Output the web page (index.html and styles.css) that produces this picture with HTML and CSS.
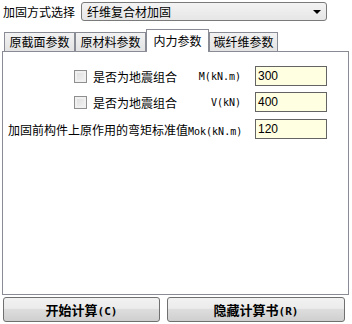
FILE: index.html
```html
<!DOCTYPE html>
<html lang="zh-CN">
<head>
    <meta charset="UTF-8">
    <title>加固计算</title>
    <link rel="stylesheet" href="styles.css">
</head>
<body>
    <div class="top">
        <span class="top-label">加固方式选择</span>
        <div class="select">
            <span>纤维复合材加固</span>
            <span class="arrow"></span>
        </div>
    </div>

    <div class="tabs">
        <div class="tab tab-1">原截面参数</div>
        <div class="tab tab-2">原材料参数</div>
        <div class="tab active">内力参数</div>
        <div class="tab tab-4">碳纤维参数</div>
    </div>

    <div class="panel">
        <div class="row">
            <label class="check"><span class="box"></span>是否为地震组合</label>
            <span class="unit">M(kN.m)</span>
            <div class="input">300</div>
        </div>
        <div class="row">
            <label class="check"><span class="box"></span>是否为地震组合</label>
            <span class="unit">V(kN)</span>
            <div class="input">400</div>
        </div>
        <div class="row row-3">
            <span class="long">加固前构件上原作用的弯矩标准值<span class="mono">Mok(kN.m)</span></span>
            <div class="input">120</div>
        </div>
    </div>

    <div class="buttons">
        <button class="btn btn-start">开始计算<span class="mono">(C)</span></button>
        <button class="btn btn-hide">隐藏计算书<span class="mono">(R)</span></button>
    </div>
</body>
</html>
```

FILE: styles.css
```css
body {
    margin: 0;
    width: 352px;
    height: 324px;
    background-color: #ffffff;
    font-family: "Noto Sans CJK SC", "Liberation Sans", sans-serif;
    font-size: 12px;
    color: #000;
    overflow: hidden;
}
.mono {
    font-family: "DejaVu Sans Mono", monospace;
    font-size: 10px;
}

/* top selector */
.top {
    display: flex;
    align-items: center;
    height: 19px;
    padding: 2px 0 0 3px;
}
.top-label {
    width: 78px;
    line-height: 19px;
}
.select {
    display: flex;
    align-items: center;
    justify-content: space-between;
    box-sizing: border-box;
    width: 246px;
    height: 19px;
    padding: 0 5px 0 5px;
    border: 1px solid #7a7a7a;
    border-radius: 3px;
    background: linear-gradient(#f3f3f3, #e6e6e6);
    line-height: 17px;
}
.arrow {
    width: 0;
    height: 0;
    border-left: 4px solid transparent;
    border-right: 4px solid transparent;
    border-top: 4px solid #000;
    margin-top: 1px;
}

/* tabs */
.tabs {
    display: flex;
    align-items: flex-end;
    height: 22px;
    margin-top: 8px;
    padding-left: 4px;
    position: relative;
    z-index: 1;
}
.tab {
    box-sizing: border-box;
    height: 19px;
    border: 1px solid #898c95;
    border-bottom: none;
    background: linear-gradient(#f2f2f2, #e3e3e3);
    text-align: center;
    line-height: 18px;
}
.tab-1, .tab-2 {
    width: 71px;
}
.tab.active {
    width: 63px;
    height: 23px;
    margin-bottom: -1px;
    background: #fff;
    line-height: 21px;
}
.tab-4 {
    width: 69px;
}

/* panel */
.panel {
    box-sizing: border-box;
    height: 244px;
    margin: 0 3px 0 2px;
    border: 1px solid #898c95;
    background: #fff;
    padding-top: 14px;
    display: flex;
    flex-direction: column;
    gap: 6px;
}
.row {
    display: flex;
    align-items: center;
    height: 20px;
    padding-right: 21px;
    white-space: nowrap;
}
.row-3 {
    margin-top: 1px;
}
.check {
    display: flex;
    align-items: center;
    margin-left: 71px;
}
.box {
    box-sizing: border-box;
    width: 13px;
    height: 13px;
    margin-right: 6px;
    border: 1px solid #8f8f8f;
    background: linear-gradient(135deg, #dcdcdc, #f4f4f4);
    box-shadow: inset 0 0 0 2px #f0f0f0;
}
.unit {
    margin-left: auto;
    margin-right: 14px;
    font-family: "DejaVu Sans Mono", monospace;
    font-size: 10px;
}
.long {
    flex: none;
    margin-left: 5px;
    margin-right: auto;
}
.input {
    flex: none;
    box-sizing: border-box;
    width: 72px;
    height: 20px;
    border: 1px solid #646464;
    background: #ffffe1;
    padding-left: 2px;
    font-family: "Liberation Sans", sans-serif;
    font-size: 12px;
    line-height: 18px;
}

/* bottom buttons */
.buttons {
    display: flex;
    margin-top: 2px;
    padding-left: 3px;
    gap: 7px;
}
.btn {
    box-sizing: border-box;
    height: 25px;
    border: 1px solid #707070;
    border-radius: 3px;
    background: linear-gradient(#f2f2f2 0%, #ebebeb 45%, #dddddd 50%, #cfcfcf 100%);
    font-family: "Noto Sans CJK SC", sans-serif;
    font-size: 13px;
    font-weight: bold;
    padding: 0;
    color: #000;
}
.btn .mono {
    font-weight: bold;
    font-size: 11px;
}
.btn-start {
    width: 157px;
}
.btn-hide {
    width: 178px;
}
```
